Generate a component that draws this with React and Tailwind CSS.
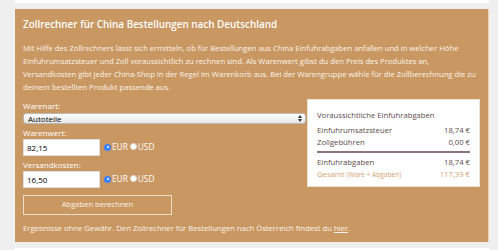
import React from "react";

function Radio({ checked }) {
  return checked ? (
    <span className="inline-flex w-[7px] h-[7px] rounded-full bg-[#3b82f6] items-center justify-center">
      <span className="w-[2px] h-[2px] rounded-full bg-white" />
    </span>
  ) : (
    <span className="inline-block w-[7px] h-[7px] rounded-full bg-white border border-[#ddd]" />
  );
}

function Currency() {
  return (
    <div className="flex items-center ml-[4px] text-white text-[8.3px] leading-none">
      <Radio checked />
      <span className="ml-[1px]">EUR</span>
      <span className="ml-[2px]"><Radio /></span>
      <span className="ml-[1px]">USD</span>
    </div>
  );
}

export default function App() {
  return (
    <div className="w-[498px] h-[250px] bg-[#efefef] overflow-hidden font-['Open_Sans',sans-serif]">
      <div className="ml-[15px] w-[474px] h-[3px] bg-white" />
      <div className="ml-[15px] mt-[6px] w-[474px] h-[233px] bg-[#c99762] border-r border-[#f3cfae] pl-[8px] pr-[8px] pt-[8px] text-white">
        <div className="text-[9.9px] leading-[14px] font-semibold">
          Zollrechner für China Bestellungen nach Deutschland
        </div>
        <p className="mt-[11px] text-[7.65px] leading-[13px] text-[#fbf3ea]">
          Mit Hilfe des Zollrechners lässt sich ermitteln, ob für Bestellungen aus China Einfuhrabgaben anfallen und in welcher Höhe
          <br />
          Einfuhrumsatzsteuer und Zoll voraussichtlich zu rechnen sind. Als Warenwert gibst du den Preis des Produktes an,
          <br />
          Versandkosten gibt jeder China-Shop in der Regel im Warenkorb aus. Bei der Warengruppe wähle für die Zollberechnung die zu
          <br />
          deinem bestellten Produkt passende aus.
        </p>
        <div className="flex mt-[6px]">
          <div className="w-[283px]">
            <div className="mt-[1px] text-[8px] leading-[10px]">Warenart:</div>
            <div className="mt-[2px] h-[11px] w-[283px] rounded-[3px] border border-[#b9b9b9] bg-gradient-to-b from-white to-[#e6e6e6] flex items-center justify-between pl-[4px] pr-[3px] text-black text-[8px] leading-none">
              <span>Autoteile</span>
              <svg width="4" height="7" viewBox="0 0 4 7">
                <path d="M0 3 L2 0 L4 3 Z" fill="#333" />
                <path d="M0 4 L2 7 L4 4 Z" fill="#333" />
              </svg>
            </div>
            <div className="mt-[4px] text-[8px] leading-[10px]">Warenwert:</div>
            <div className="mt-[1px] flex items-center">
              <div className="w-[77px] h-[17px] bg-white border border-[#ddd] flex items-center pl-[3px] text-black text-[8px]">82,15</div>
              <Currency />
            </div>
            <div className="mt-[4px] text-[8px] leading-[10px]">Versandkosten:</div>
            <div className="mt-[1px] flex items-center">
              <div className="w-[77px] h-[17px] bg-white border border-[#ddd] flex items-center pl-[3px] text-black text-[8px]">16,50</div>
              <Currency />
            </div>
            <div className="mt-[7px] w-[149px] h-[20px] border border-[#ecdccb] flex items-center justify-center text-[7.6px] text-[#fbf3ea]">
              Abgaben berechnen
            </div>
          </div>
          <div className="ml-[1px] -mt-[1px] w-[174px] h-[88px] self-start bg-white border border-[#f0e2d2] pl-[9px] pr-[9px] pt-[9px] text-[#5b4a4d] text-[7.7px]">
            <div className="leading-[12px]">Voraussichtliche Einfuhrabgaben</div>
            <div className="mt-[3px] flex justify-between leading-[12px]">
              <span>Einfuhrumsatzsteuer</span>
              <span>18,74 €</span>
            </div>
            <div className="flex justify-between leading-[12px]">
              <span>Zollgebühren</span>
              <span>0,00 €</span>
            </div>
            <div className="mt-[3px] h-[2px] bg-[#8d7479]" />
            <div className="mt-[3px] flex justify-between leading-[12px]">
              <span>Einfuhrabgaben</span>
              <span>18,74 €</span>
            </div>
            <div className="flex justify-between leading-[12px] text-[#d6a36d]">
              <span>
                Gesamt <span className="text-[6.6px]">(Ware + Abgaben)</span>
              </span>
              <span>117,39 €</span>
            </div>
          </div>
        </div>
        <div className="mt-[7px] text-[7.7px] leading-[12px] text-[#fbf3ea]">
          Ergebnisse ohne Gewähr. Den Zollrechner für Bestellungen nach Österreich findest du <span className="underline">hier</span>.
        </div>
      </div>
      <div className="ml-[15px] mt-[6px] w-[474px] h-[2px] bg-white" />
    </div>
  );
}
